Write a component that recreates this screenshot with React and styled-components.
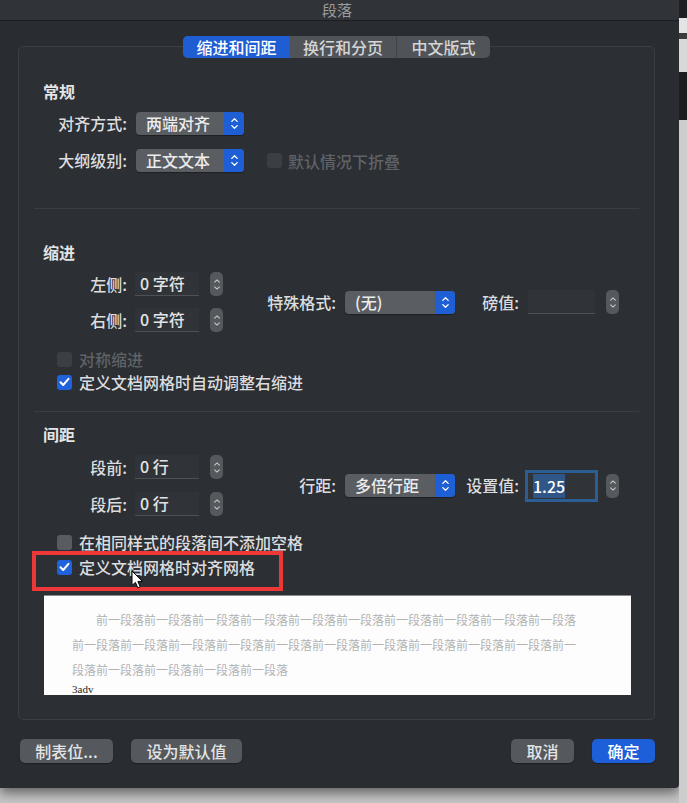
import React from 'react';
import styled, { createGlobalStyle, css } from 'styled-components';

const GlobalStyle = createGlobalStyle`
  html, body {
    margin: 0;
    padding: 0;
  }
  body {
    background: #c6c6c6;
    font-family: "Noto Sans CJK SC", "Noto Sans", sans-serif;
    overflow: hidden;
  }
`;

const Page = styled.div`
  display: flex;
  align-items: flex-start;
  width: 687px;
  height: 803px;
`;

const Dialog = styled.div`
  width: 679px;
  height: 788px;
  flex-shrink: 0;
  display: flex;
  flex-direction: column;
  background: #292c30;
  border-bottom-right-radius: 4px;
  box-shadow: 0 5px 12px rgba(0, 0, 0, 0.5);
`;

const TitleBar = styled.div`
  height: 20px;
  padding-right: 5px;
  background: #303337;
  border-bottom: 1px solid #1c1e21;
  color: #9b9c9e;
  font-size: 15px;
  line-height: 19px;
  text-align: center;
`;

const Body = styled.div`
  display: flex;
  flex-direction: column;
  padding: 25px 24px 0 18px;
`;

const GroupBox = styled.div`
  height: 674px;
  box-sizing: border-box;
  display: flex;
  flex-direction: column;
  background: #2c2f33;
  border: 1px solid #3b3e42;
  border-radius: 5px;
`;

const TabBar = styled.div`
  align-self: center;
  display: flex;
  height: 22px;
  margin-top: -11px;
  border-radius: 5px;
  background: #505357;
`;

const Tab = styled.div`
  width: ${(p) => p.$w}px;
  display: flex;
  align-items: center;
  justify-content: center;
  font-size: 16px;
  font-weight: 500;
  color: ${(p) => (p.$active ? '#ffffff' : '#d4d5d6')};
  background: ${(p) => (p.$active ? '#1f5dd2' : 'transparent')};
  border-radius: ${(p) => (p.$active ? '5px 0 0 5px' : '0')};
  ${(p) =>
    p.$divider &&
    css`
      border-left: 1px solid #404347;
    `}
`;

const Header = styled.div`
  margin-top: ${(p) => p.$mt}px;
  padding-left: 24px;
  font-size: 16px;
  font-weight: 700;
  line-height: 20px;
  color: #e3e4e5;
`;

const Row = styled.div`
  display: flex;
  align-items: center;
  height: ${(p) => p.$h || 23}px;
  margin-top: ${(p) => p.$mt || 0}px;
`;

const Label = styled.span`
  width: ${(p) => p.$w}px;
  flex-shrink: 0;
  text-align: right;
  font-size: 16px;
  font-weight: 500;
  line-height: 23px;
  color: #dcdddf;
  white-space: nowrap;
`;

const Popup = styled.div`
  width: ${(p) => p.$w}px;
  height: 23px;
  margin-left: ${(p) => p.$ml}px;
  display: flex;
  flex-shrink: 0;
  border-radius: 4px;
  overflow: hidden;
  background: #5a5d61;
  box-shadow: 0 1px 1px rgba(0, 0, 0, 0.35);
`;

const PopupText = styled.span`
  flex: 1;
  padding-left: 10px;
  font-size: 16px;
  font-weight: 500;
  line-height: 23px;
  color: #ececec;
  white-space: nowrap;
`;

const PopupArrow = styled.span`
  width: 20px;
  display: flex;
  flex-direction: column;
  align-items: center;
  justify-content: center;
  gap: 3px;
  background: #1f5fd6;
`;

const Field = styled.div`
  width: ${(p) => p.$w}px;
  height: 24px;
  margin-left: ${(p) => p.$ml}px;
  flex-shrink: 0;
  box-sizing: border-box;
  padding-left: 5px;
  background: #303338;
  border-bottom: 1px solid #4d5054;
  font-size: 16px;
  font-weight: 500;
  line-height: 23px;
  color: #e2e3e4;
  white-space: nowrap;
  ${(p) =>
    p.$focus &&
    css`
      height: 26px;
      line-height: 26px;
      border-bottom: none;
      box-shadow: 0 0 0 3px #2c5e93;
    `}
`;

const Selected = styled.span`
  background: #2f5686;
  color: #ffffff;
`;

const Stepper = styled.div`
  width: 13px;
  height: 24px;
  margin-left: ${(p) => p.$ml}px;
  flex-shrink: 0;
  display: flex;
  flex-direction: column;
  align-items: center;
  justify-content: center;
  gap: 3px;
  border-radius: 5px;
  background: #55585c;
`;

const FieldBlock = styled.div`
  display: flex;
  align-items: center;
  margin-top: ${(p) => p.$mt}px;
`;

const FieldColumn = styled.div`
  display: flex;
  flex-direction: column;
  gap: ${(p) => p.$gap}px;
`;

const Divider = styled.div`
  height: 1px;
  margin: ${(p) => p.$mt}px 15px 0;
  background: #3a3d41;
`;

const CheckRow = styled.div`
  position: relative;
  display: flex;
  align-items: center;
  height: 22px;
  margin-top: ${(p) => p.$mt}px;
  padding-left: ${(p) => p.$pl || 38}px;
`;

const CheckBox = styled.span`
  width: 15px;
  height: 15px;
  flex-shrink: 0;
  display: flex;
  align-items: center;
  justify-content: center;
  border-radius: 3px;
  background: ${(p) => (p.$checked ? '#1f62dc' : p.$disabled ? '#3b3e42' : '#585b5f')};
`;

const CheckText = styled.span`
  margin-left: ${(p) => p.$ml || 7}px;
  font-size: 16px;
  font-weight: 500;
  line-height: 22px;
  color: ${(p) => (p.$disabled ? '#5f6266' : '#dcdddf')};
  white-space: nowrap;
`;

const Highlight = styled.div`
  position: absolute;
  left: 13px;
  top: -5px;
  width: 251px;
  height: 40px;
  box-sizing: border-box;
  border: 4px solid #ee3737;
  pointer-events: none;
`;

const Cursor = styled.svg`
  position: absolute;
  left: 112px;
  top: 14px;
`;

const Preview = styled.div`
  width: 587px;
  height: 100px;
  margin: 17px 0 0 25px;
  box-sizing: border-box;
  padding: 11px 0 0 28px;
  overflow: hidden;
  background: #fdfdfd;
  border-top: 1px solid #8c8c8c;
`;

const PreviewLine = styled.div`
  height: 25px;
  padding-left: ${(p) => (p.$indent ? 24 : 0)}px;
  font-size: 12px;
  line-height: 25px;
  color: #b3b3b3;
  white-space: nowrap;
`;

const PreviewSample = styled.div`
  font-family: "Liberation Serif", serif;
  font-size: 11px;
  line-height: 14px;
  color: #1d1d1d;
`;

const Footer = styled.div`
  display: flex;
  align-items: center;
  gap: 18px;
  margin-top: 19px;
  padding-left: 2px;
`;

const Spacer = styled.div`
  flex: 1;
`;

const Button = styled.button`
  width: ${(p) => p.$w}px;
  height: 24px;
  padding: 0;
  border: none;
  border-radius: 5px;
  background: ${(p) => (p.$primary ? '#1d5fd8' : '#55585c')};
  color: ${(p) => (p.$primary ? '#ffffff' : '#e3e4e5')};
  font-family: "Noto Sans CJK SC", sans-serif;
  font-size: 16px;
  font-weight: 500;
  line-height: 24px;
  box-shadow: 0 1px 1px rgba(0, 0, 0, 0.3);
`;

const ScreenEdge = styled.div`
  width: 8px;
  height: 803px;
  display: flex;
  flex-direction: column;
`;

const EdgeBlock = styled.div`
  height: ${(p) => (p.$h ? `${p.$h}px` : 'auto')};
  flex: ${(p) => (p.$h ? 'none' : 1)};
  background: ${(p) => p.$c};
`;

const Chevron = ({ up, color = '#ffffff', w = 7 }) => (
  <svg width={w} height="4" viewBox="0 0 7 4">
    <path
      d={up ? 'M0.8 3.4 L3.5 0.8 L6.2 3.4' : 'M0.8 0.6 L3.5 3.2 L6.2 0.6'}
      fill="none"
      stroke={color}
      strokeWidth="1.3"
      strokeLinecap="round"
      strokeLinejoin="round"
    />
  </svg>
);

const Select = ({ value, w, ml }) => (
  <Popup $w={w} $ml={ml}>
    <PopupText>{value}</PopupText>
    <PopupArrow>
      <Chevron up />
      <Chevron />
    </PopupArrow>
  </Popup>
);

const Spin = ({ ml }) => (
  <Stepper $ml={ml}>
    <Chevron up color="#c4c5c6" w={6} />
    <Chevron color="#c4c5c6" w={6} />
  </Stepper>
);

const Check = ({ checked, disabled }) => (
  <CheckBox $checked={checked} $disabled={disabled}>
    {checked && (
      <svg width="11" height="10" viewBox="0 0 11 10">
        <path
          d="M1.5 5.2 L4.2 8 L9.5 1.8"
          fill="none"
          stroke="#ffffff"
          strokeWidth="2"
          strokeLinecap="round"
          strokeLinejoin="round"
        />
      </svg>
    )}
  </CheckBox>
);

const unit = '前一段落';
const previewLines = [
  unit.repeat(10),
  unit.repeat(10) + '前一',
  '段落' + unit.repeat(4),
];

const App = () => {
  return (
    <>
      <GlobalStyle />
      <Page>
        <Dialog>
          <TitleBar>段落</TitleBar>
          <Body>
            <GroupBox>
              <TabBar>
                <Tab $w={107} $active>
                  缩进和间距
                </Tab>
                <Tab $w={106}>换行和分页</Tab>
                <Tab $w={93} $divider>
                  中文版式
                </Tab>
              </TabBar>

              {/* 常规 */}
              <Header $mt={23}>常规</Header>
              <Row $mt={11}>
                <Label $w={108}>对齐方式:</Label>
                <Select value="两端对齐" w={108} ml={9} />
              </Row>
              <Row $mt={14}>
                <Label $w={108}>大纲级别:</Label>
                <Select value="正文文本" w={108} ml={9} />
                <CheckRow $mt={0} $pl={23}>
                  <Check disabled />
                  <CheckText $disabled $ml={6}>
                    默认情况下折叠
                  </CheckText>
                </CheckRow>
              </Row>
              <Divider $mt={36} />

              {/* 缩进 */}
              <Header $mt={33}>缩进</Header>
              <FieldBlock $mt={10}>
                <FieldColumn $gap={12}>
                  <Row $h={24}>
                    <Label $w={108}>左侧:</Label>
                    <Field $w={64} $ml={8}>0 字符</Field>
                    <Spin ml={11} />
                  </Row>
                  <Row $h={24}>
                    <Label $w={108}>右侧:</Label>
                    <Field $w={64} $ml={8}>0 字符</Field>
                    <Spin ml={11} />
                  </Row>
                </FieldColumn>
                <Label $w={113}>特殊格式:</Label>
                <Select value="(无)" w={110} ml={9} />
                <Label $w={64}>磅值:</Label>
                <Field $w={67} $ml={9} />
                <Spin ml={11} />
              </FieldBlock>
              <CheckRow $mt={16}>
                <Check disabled />
                <CheckText $disabled>对称缩进</CheckText>
              </CheckRow>
              <CheckRow $mt={1}>
                <Check checked />
                <CheckText>定义文档网格时自动调整右缩进</CheckText>
              </CheckRow>
              <Divider $mt={18} />

              {/* 间距 */}
              <Header $mt={12}>间距</Header>
              <FieldBlock $mt={11}>
                <FieldColumn $gap={13}>
                  <Row $h={24}>
                    <Label $w={108}>段前:</Label>
                    <Field $w={64} $ml={8}>0 行</Field>
                    <Spin ml={11} />
                  </Row>
                  <Row $h={24}>
                    <Label $w={108}>段后:</Label>
                    <Field $w={64} $ml={8}>0 行</Field>
                    <Spin ml={11} />
                  </Row>
                </FieldColumn>
                <Label $w={113}>行距:</Label>
                <Select value="多倍行距" w={110} ml={9} />
                <Label $w={64}>设置值:</Label>
                <Field $w={67} $ml={9} $focus>
                  <Selected>1.25</Selected>
                </Field>
                <Spin ml={11} />
              </FieldBlock>
              <CheckRow $mt={15}>
                <Check />
                <CheckText>在相同样式的段落间不添加空格</CheckText>
              </CheckRow>
              <CheckRow $mt={3} $pl={38}>
                <Check checked />
                <CheckText>定义文档网格时对齐网格</CheckText>
                <Highlight />
                <Cursor width="13" height="19" viewBox="0 0 13 19">
                  <path
                    d="M1 1 L1 15.5 L4.4 12.4 L6.8 17.8 L9.2 16.8 L6.9 11.5 L11.4 11.3 Z"
                    fill="#ffffff"
                    stroke="#000000"
                    strokeWidth="1"
                    strokeLinejoin="round"
                  />
                </Cursor>
              </CheckRow>

              <Preview>
                {previewLines.map((line, i) => (
                  <PreviewLine key={i} $indent={i === 0}>
                    {line}
                  </PreviewLine>
                ))}
                <PreviewSample>3adv</PreviewSample>
              </Preview>
            </GroupBox>

            <Footer>
              <Button $w={93}>制表位...</Button>
              <Button $w={111}>设为默认值</Button>
              <Spacer />
              <Button $w={63}>取消</Button>
              <Button $w={63} $primary>
                确定
              </Button>
            </Footer>
          </Body>
        </Dialog>
        <ScreenEdge>
          <EdgeBlock $h={18} $c="#1f2023" />
          <EdgeBlock $h={15} $c="#e4e4e4" />
          <EdgeBlock $h={6} $c="#3c3c3c" />
          <EdgeBlock $h={33} $c="#d9d9d9" />
          <EdgeBlock $h={48} $c="#1c1d1f" />
          <EdgeBlock $c="#cdcdcd" />
        </ScreenEdge>
      </Page>
    </>
  );
};

export default App;
